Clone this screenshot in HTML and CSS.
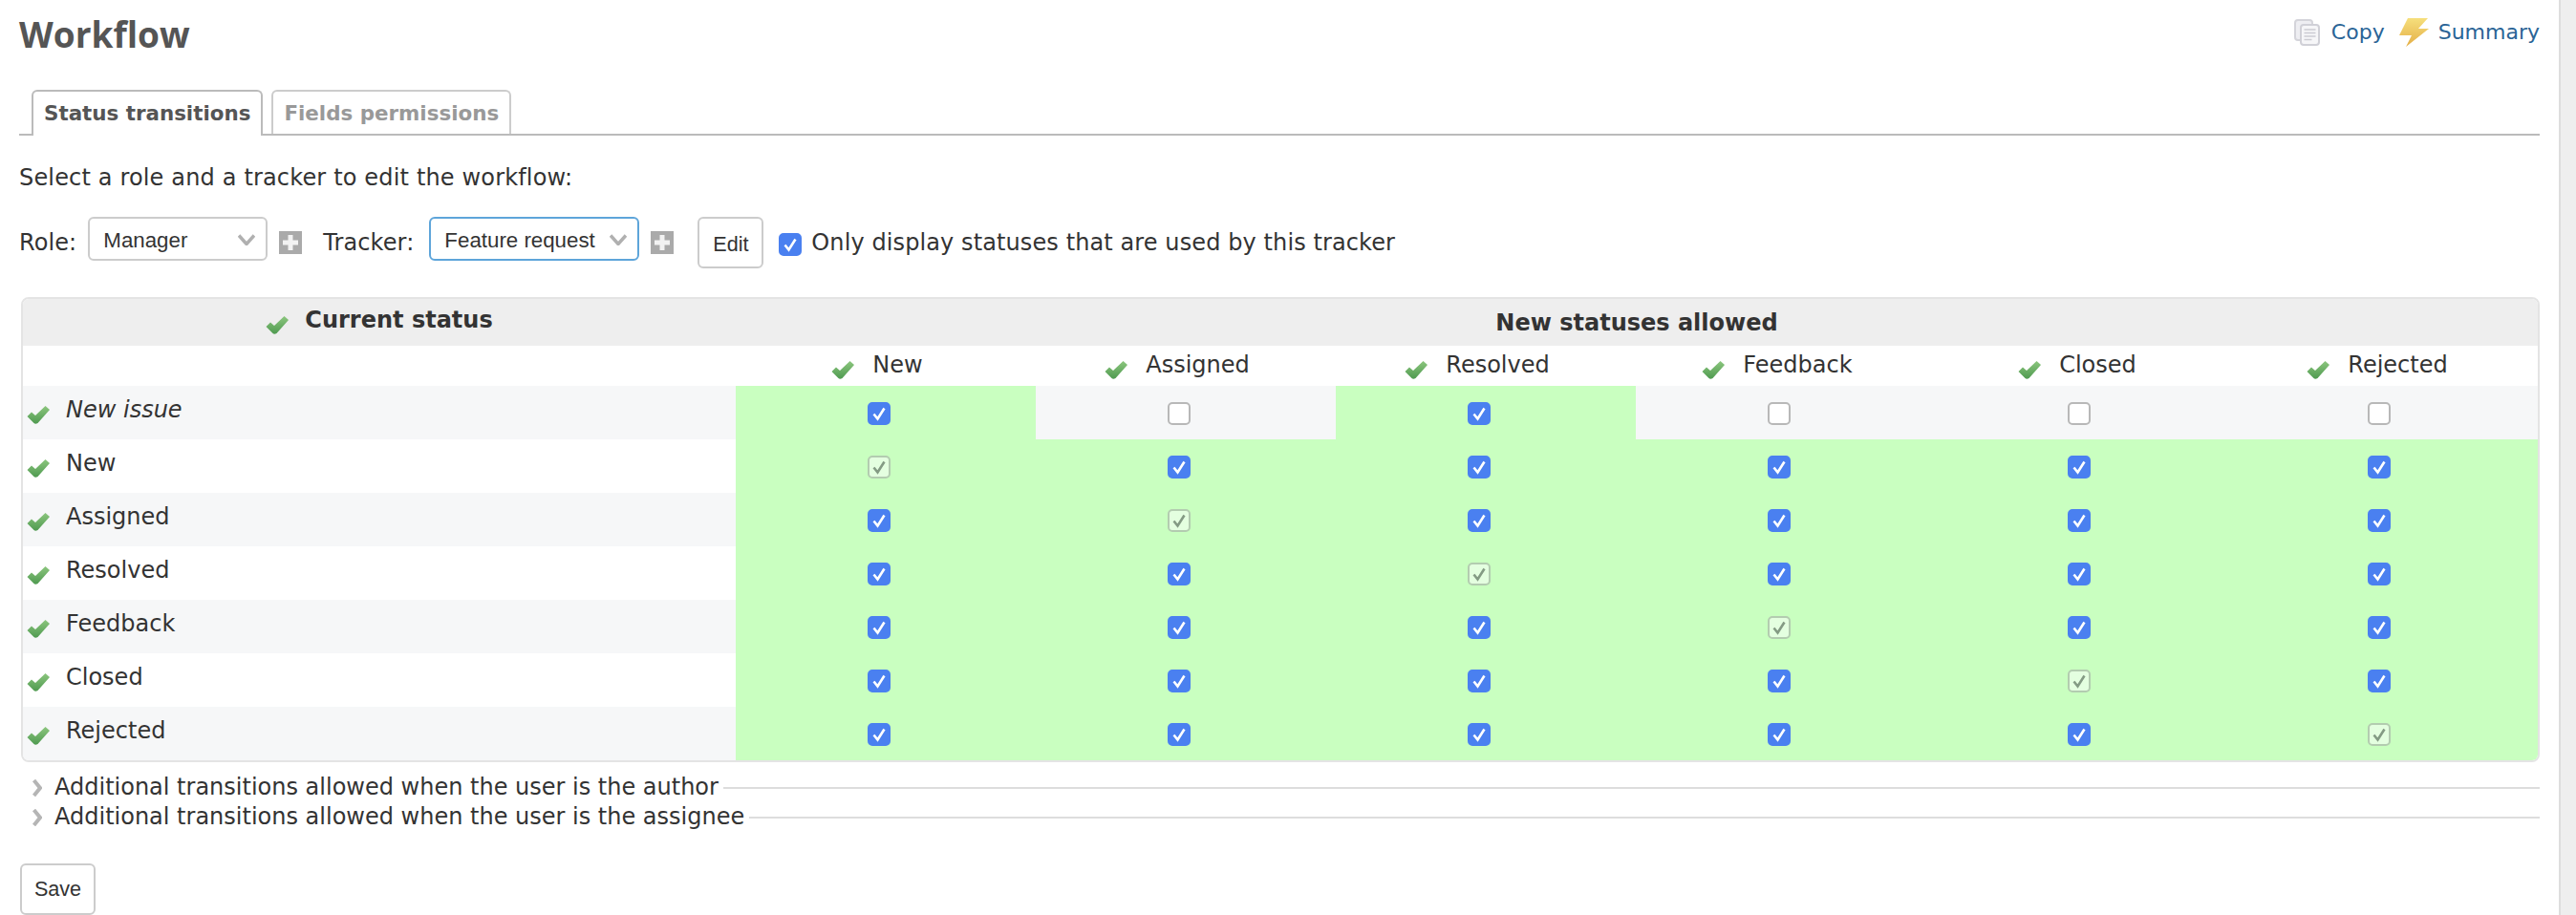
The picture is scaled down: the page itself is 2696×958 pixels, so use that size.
FILE: index.html
```html
<!DOCTYPE html>
<html lang="en">
<head>
<meta charset="utf-8">
<title>Workflow</title>
<link rel="stylesheet" href="styles.css">
</head>
<body>
<svg class="sprite" aria-hidden="true">
  <defs>
    <linearGradient id="tickfill" x1="0" y1="0" x2="0" y2="1">
      <stop offset="0" stop-color="#8cc67e"/>
      <stop offset="1" stop-color="#4f9a50"/>
    </linearGradient>
    <linearGradient id="boltfill" x1="0" y1="0" x2="0" y2="1">
      <stop offset="0" stop-color="#f6df7c"/>
      <stop offset="1" stop-color="#e4ae46"/>
    </linearGradient>
    <symbol id="tick" viewBox="0 0 24 20">
      <path d="M0.500 12 5 7.500 9 11 19.500 1 24 5 11.500 19Q9 20.500 7.500 19Z" fill="url(#tickfill)"/>
    </symbol>
    <symbol id="plus" viewBox="0 0 24 24">
      <rect width="24" height="24" fill="#aaaaaa"/>
      <path d="M9.500 4h5v5.500H20v5h-5.500V20h-5v-5.500H4v-5h5.500Z" fill="#f2f2f2"/>
    </symbol>
    <symbol id="chev" viewBox="0 0 18 12">
      <path d="M1 1.500 9 10.500 17 1.500" fill="none" stroke="#b0b0b0" stroke-width="3.500"/>
    </symbol>
    <symbol id="arrow" viewBox="0 0 10 18">
      <path d="M1.500 1 8 9 1.500 17" fill="none" stroke="#b5b5b5" stroke-width="4"/>
    </symbol>
  </defs>
</svg>

<div class="page">
  <main class="content">
    <header class="titlebar">
      <h2 class="title">Workflow</h2>
      <nav class="actions">
        <svg class="action-icon" width="27" height="28" viewBox="0 0 27 28">
          <rect x="1" y="1" width="18" height="21" rx="3" fill="#eeeef2" stroke="#d4d4da" stroke-width="2"/>
          <rect x="7" y="6" width="19" height="21" rx="3" fill="#f6f6f8" stroke="#d0d0d7" stroke-width="2"/>
          <path d="M10.500 11h12M10.500 14.500h12M10.500 18h12M10.500 21.500h8" stroke="#cbcbd2" stroke-width="1.500"/>
        </svg>
        <a class="action" href="#">Copy</a>
        <svg class="action-icon bolt" width="31" height="30" viewBox="0 0 31 30">
          <path d="M9 0H30L20 11H31L7 30 13 18H0Z" fill="url(#boltfill)"/>
        </svg>
        <a class="action" href="#">Summary</a>
      </nav>
    </header>

    <ul class="tabs">
      <li class="tab selected">Status transitions</li>
      <li class="tab">Fields permissions</li>
    </ul>

    <p class="intro">Select a role and a tracker to edit the workflow:</p>

    <form class="filters">
      <label class="filter-label">Role:</label>
      <div class="select-wrap role">
        <select class="select"><option>Manager</option></select>
        <svg class="chev"><use href="#chev"/></svg>
      </div>
      <svg class="plus"><use href="#plus"/></svg>
      <label class="filter-label tracker-label">Tracker:</label>
      <div class="select-wrap tracker">
        <select class="select focused"><option>Feature request</option></select>
        <svg class="chev"><use href="#chev"/></svg>
      </div>
      <svg class="plus"><use href="#plus"/></svg>
      <button type="button" class="btn edit">Edit</button>
      <input type="checkbox" class="cb only" checked>
      <label class="filter-label">Only display statuses that are used by this tracker</label>
    </form>

    <div class="box">
      <table class="matrix">
        <colgroup><col class="col-first"><col span="5" class="col-status"><col></colgroup>
        <thead>
          <tr class="head-main">
            <th class="head-current"><svg class="tick"><use href="#tick"/></svg>Current status</th>
            <th colspan="6" class="head-new">New statuses allowed</th>
          </tr>
          <tr class="head-sub">
            <td></td>
            <td><span class="cell-label"><svg class="tick"><use href="#tick"/></svg>New</span></td>
            <td><span class="cell-label"><svg class="tick"><use href="#tick"/></svg>Assigned</span></td>
            <td><span class="cell-label"><svg class="tick"><use href="#tick"/></svg>Resolved</span></td>
            <td><span class="cell-label"><svg class="tick"><use href="#tick"/></svg>Feedback</span></td>
            <td><span class="cell-label"><svg class="tick"><use href="#tick"/></svg>Closed</span></td>
            <td><span class="cell-label"><svg class="tick"><use href="#tick"/></svg>Rejected</span></td>
          </tr>
        </thead>
        <tbody>
          <tr>
            <td class="name"><svg class="tick"><use href="#tick"/></svg><em>New issue</em></td>
            <td class="on"><input type="checkbox" class="cb" checked></td>
            <td><input type="checkbox" class="cb"></td>
            <td class="on"><input type="checkbox" class="cb" checked></td>
            <td><input type="checkbox" class="cb"></td>
            <td><input type="checkbox" class="cb"></td>
            <td><input type="checkbox" class="cb"></td>
          </tr>
          <tr>
            <td class="name"><svg class="tick"><use href="#tick"/></svg>New</td>
            <td class="on"><input type="checkbox" class="cb" checked disabled></td>
            <td class="on"><input type="checkbox" class="cb" checked></td>
            <td class="on"><input type="checkbox" class="cb" checked></td>
            <td class="on"><input type="checkbox" class="cb" checked></td>
            <td class="on"><input type="checkbox" class="cb" checked></td>
            <td class="on"><input type="checkbox" class="cb" checked></td>
          </tr>
          <tr>
            <td class="name"><svg class="tick"><use href="#tick"/></svg>Assigned</td>
            <td class="on"><input type="checkbox" class="cb" checked></td>
            <td class="on"><input type="checkbox" class="cb" checked disabled></td>
            <td class="on"><input type="checkbox" class="cb" checked></td>
            <td class="on"><input type="checkbox" class="cb" checked></td>
            <td class="on"><input type="checkbox" class="cb" checked></td>
            <td class="on"><input type="checkbox" class="cb" checked></td>
          </tr>
          <tr>
            <td class="name"><svg class="tick"><use href="#tick"/></svg>Resolved</td>
            <td class="on"><input type="checkbox" class="cb" checked></td>
            <td class="on"><input type="checkbox" class="cb" checked></td>
            <td class="on"><input type="checkbox" class="cb" checked disabled></td>
            <td class="on"><input type="checkbox" class="cb" checked></td>
            <td class="on"><input type="checkbox" class="cb" checked></td>
            <td class="on"><input type="checkbox" class="cb" checked></td>
          </tr>
          <tr>
            <td class="name"><svg class="tick"><use href="#tick"/></svg>Feedback</td>
            <td class="on"><input type="checkbox" class="cb" checked></td>
            <td class="on"><input type="checkbox" class="cb" checked></td>
            <td class="on"><input type="checkbox" class="cb" checked></td>
            <td class="on"><input type="checkbox" class="cb" checked disabled></td>
            <td class="on"><input type="checkbox" class="cb" checked></td>
            <td class="on"><input type="checkbox" class="cb" checked></td>
          </tr>
          <tr>
            <td class="name"><svg class="tick"><use href="#tick"/></svg>Closed</td>
            <td class="on"><input type="checkbox" class="cb" checked></td>
            <td class="on"><input type="checkbox" class="cb" checked></td>
            <td class="on"><input type="checkbox" class="cb" checked></td>
            <td class="on"><input type="checkbox" class="cb" checked></td>
            <td class="on"><input type="checkbox" class="cb" checked disabled></td>
            <td class="on"><input type="checkbox" class="cb" checked></td>
          </tr>
          <tr>
            <td class="name"><svg class="tick"><use href="#tick"/></svg>Rejected</td>
            <td class="on"><input type="checkbox" class="cb" checked></td>
            <td class="on"><input type="checkbox" class="cb" checked></td>
            <td class="on"><input type="checkbox" class="cb" checked></td>
            <td class="on"><input type="checkbox" class="cb" checked></td>
            <td class="on"><input type="checkbox" class="cb" checked></td>
            <td class="on"><input type="checkbox" class="cb" checked disabled></td>
          </tr>
        </tbody>
      </table>
    </div>

    <div class="collapsible first">
      <svg class="arrow"><use href="#arrow"/></svg>
      <span>Additional transitions allowed when the user is the author</span>
      <span class="rule"></span>
    </div>
    <div class="collapsible">
      <svg class="arrow"><use href="#arrow"/></svg>
      <span>Additional transitions allowed when the user is the assignee</span>
      <span class="rule"></span>
    </div>

    <button type="button" class="btn save">Save</button>
  </main>
  <aside class="strip"></aside>
</div>
</body>
</html>
```

FILE: styles.css
```css
* { box-sizing: border-box; }

html, body {
  margin: 0;
  height: 100%;
  overflow: hidden;
  background: #fff;
}

body {
  font-family: "DejaVu Sans", Verdana, sans-serif;
  font-size: 24px;
  color: #333;
}

.sprite {
  position: absolute;
  width: 0;
  height: 0;
}

.page {
  display: flex;
  height: 958px;
  overflow: hidden;
}

.content {
  flex: 0 0 2680px;
  padding: 0 20px;
  border-right: 2px solid #ddd;
}

.strip {
  flex: 1;
  background: #eee;
}

/* title bar */
.titlebar {
  display: flex;
  justify-content: space-between;
  height: 94px;
}

.title {
  margin: 10px 0 0;
  font-family: "Open Sans", sans-serif;
  font-size: 37px;
  line-height: 52px;
  font-weight: 700;
  color: #555;
}

.actions {
  display: flex;
  align-items: flex-start;
  padding-top: 19px;
}

.action {
  color: #2a6496;
  font-size: 22px;
  line-height: 30px;
  text-decoration: none;
}

.action-icon {
  flex: none;
  margin: 1px 12px 0 0;
}

.action-icon.bolt {
  margin: 0 10px 0 15px;
  filter: blur(0.4px);
}

/* tabs */
.tabs {
  display: flex;
  gap: 9px;
  height: 48px;
  margin: 0;
  padding: 0 0 0 13px;
  list-style: none;
  border-bottom: 2px solid #bbb;
}

.tab {
  height: 46px;
  padding: 0 11px;
  border: 2px solid #ccc;
  border-bottom: 0;
  border-radius: 6px 6px 0 0;
  background: #fff;
  font-size: 21.400px;
  line-height: 46px;
  font-weight: 700;
  color: #999;
}

.tab.selected {
  height: 48px;
  border-color: #bbb;
  color: #555;
}

/* intro + filters */
.intro {
  margin: 29px 0 0;
  line-height: 30px;
  letter-spacing: 0.16px;
}

.filters {
  display: flex;
  align-items: flex-start;
  height: 84px;
  margin-top: 26px;
}

.filter-label {
  line-height: 54px;
  letter-spacing: 0.1px;
}

.select-wrap {
  position: relative;
  flex: none;
  height: 46px;
  margin-left: 12px;
}

.role { width: 188px; }

.tracker {
  width: 220px;
  margin-left: 16px;
}

.select {
  display: block;
  width: 100%;
  height: 100%;
  padding: 3px 40px 0 14px;
  appearance: none;
  -webkit-appearance: none;
  background: #fff;
  border: 2px solid #ccc;
  border-radius: 6px;
  font-family: "Liberation Sans", Arial, sans-serif;
  font-size: 22.300px;
  color: #333;
}

.select.focused { border-color: #5ea5da; }

.chev {
  position: absolute;
  top: 18px;
  right: 13px;
  width: 18px;
  height: 12px;
}

.plus {
  flex: none;
  width: 24px;
  height: 24px;
  margin: 15px 0 0 12px;
}

.tracker-label { margin-left: 22px; }

.btn {
  flex: none;
  height: 54px;
  padding: 0;
  background: #fff;
  border: 2px solid #ccc;
  border-radius: 6px;
  font-family: "Liberation Sans", Arial, sans-serif;
  font-size: 21.600px;
  color: #333;
}

.edit {
  width: 69px;
  margin-left: 25px;
  padding-top: 4px;
}

.cb {
  appearance: none;
  -webkit-appearance: none;
  display: inline-block;
  width: 24px;
  height: 24px;
  margin: 0 14px 0 0;
  vertical-align: middle;
  background: #fff center / 24px 24px no-repeat;
  border: 2px solid #b8b8b8;
  border-radius: 5px;
}

.cb:checked {
  background-color: #4a80f0;
  border-color: #4a80f0;
  background-image: url("data:image/svg+xml,%3Csvg xmlns='http://www.w3.org/2000/svg' viewBox='0 0 24 24'%3E%3Cpath d='M6.500 12.500 10.500 17.500 17.500 6.500' fill='none' stroke='%23fff' stroke-width='2.600'/%3E%3C/svg%3E");
  background-origin: border-box;
}

.cb:disabled {
  background-color: rgba(255, 255, 255, 0.5);
  border-color: #b3ccb0;
  background-image: url("data:image/svg+xml,%3Csvg xmlns='http://www.w3.org/2000/svg' viewBox='0 0 24 24'%3E%3Cpath d='M6.500 12.500 10.500 17.500 17.500 6.500' fill='none' stroke='%23849b84' stroke-width='2.600'/%3E%3C/svg%3E");
}

.cb.only {
  margin: 17px 0 0 16px;
}

.only + .filter-label { margin-left: 10px; }

/* matrix */
.box {
  width: 2636px;
  margin: 0 0 0 2px;
  border: 2px solid #e4e4e4;
  border-radius: 8px;
  overflow: hidden;
}

.matrix {
  width: 2632px;
  table-layout: fixed;
  border-collapse: collapse;
  border-spacing: 0;
}

.col-first { width: 746px; }
.col-status { width: 314px; }

.matrix th,
.matrix td {
  padding: 0;
  font-size: 24px;
  font-weight: 400;
}

.matrix td:last-child { padding-right: 2px; }

.head-main {
  height: 49px;
  background: #eee;
}

.matrix .head-current,
.matrix .head-new {
  font-weight: 700;
  text-align: center;
}

.matrix .head-current { padding-bottom: 5px; }

.head-sub { height: 42px; }

.matrix .head-sub td {
  text-align: center;
  padding-bottom: 2px;
}

.cell-label { padding-right: 18px; }

.tick {
  width: 24px;
  height: 20px;
  margin-right: 17px;
  vertical-align: -7px;
  filter: blur(0.5px);
}

.cell-label .tick { margin-right: 19px; }

.matrix tbody tr { height: 56px; }
.matrix tbody tr:nth-child(odd) { background: #f6f7f8; }
.matrix tbody td { text-align: center; }

.matrix tbody td.name {
  padding: 0 0 6px 4px;
  text-align: left;
}

.matrix tbody td.on { background: #c9ffc0; }

/* collapsibles */
.collapsible {
  display: flex;
  align-items: center;
  height: 31px;
  padding-left: 14px;
  line-height: 31px;
}

.collapsible.first { margin-top: 11px; }

.arrow {
  flex: none;
  width: 10px;
  height: 18px;
  margin-right: 13px;
  filter: blur(0.4px);
}

.rule {
  flex: 1;
  height: 2px;
  margin-left: 5px;
  background: #ddd;
}

.btn.save {
  display: block;
  width: 79px;
  margin: 33px 0 0 1px;
}
```
